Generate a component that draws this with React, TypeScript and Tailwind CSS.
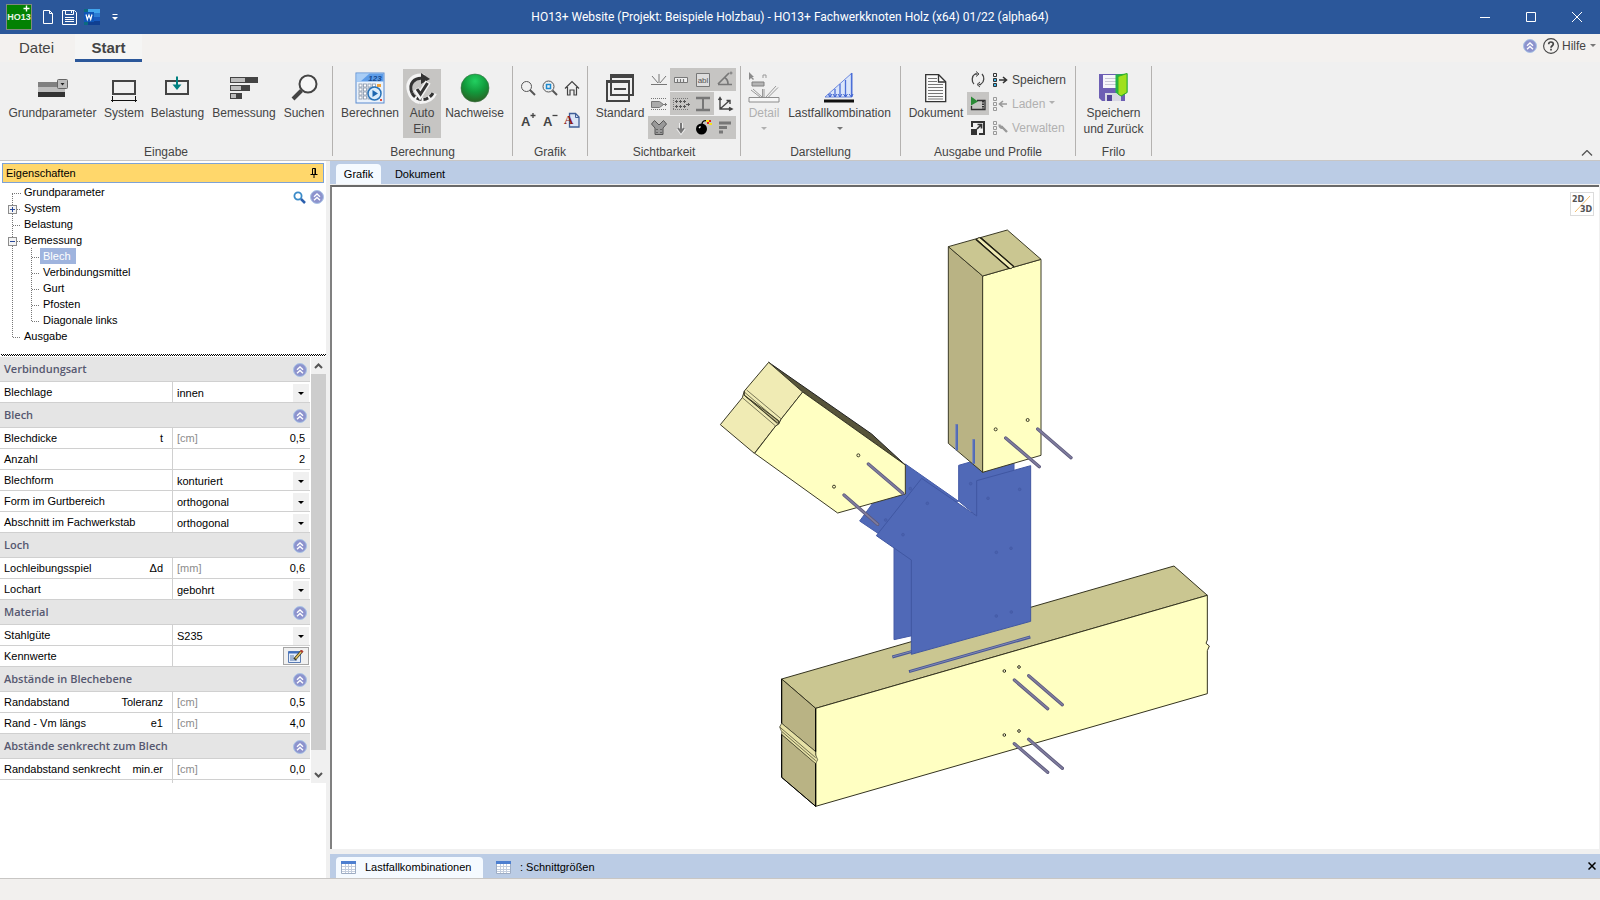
import React, { useState } from "react";
import clsx from "clsx";

const SANS = "font-['Liberation_Sans',Arial,sans-serif]";
const UI = "font-['Open_Sans','Noto_Sans',sans-serif]";

/* ---------- small shared pieces ---------- */

const CollapseBadge = ({ size = 14 }: { size?: number }) => (
  <svg width={size} height={size} viewBox="0 0 14 14" className="shrink-0">
    <circle cx="7" cy="7" r="6.5" fill="#8d93cd" stroke="#a9c3e6" />
    <path d="M4 6.8 7 4l3 2.8M4 10.3 7 7.5l3 2.8" fill="none" stroke="#fff" strokeWidth="1.3" />
  </svg>
);

const Caret = ({ className }: { className?: string }) => (
  <svg width="6" height="3" viewBox="0 0 6 3" className={className}>
    <path d="M0 0h6L3 3z" fill="currentColor" />
  </svg>
);

/* ---------- title bar ---------- */

const TitleBar = () => (
  <header className="flex h-[34px] shrink-0 items-center bg-[#2b579a] text-white">
    <div className="flex w-[520px] items-center pl-[6px]">
      <svg width="26" height="26" viewBox="0 0 26 26">
        <rect x=".5" y=".5" width="25" height="25" fill="#038103" stroke="#808a80" />
        <path d="M20.5 1.5v6M17.5 4.5h6" stroke="#fff" strokeWidth="1.4" />
        <text x="13" y="16" fontSize="9" textAnchor="middle" fontWeight="bold" fill="#e8f5e8" fontFamily="Liberation Sans, sans-serif">
          HO13
        </text>
      </svg>
      <button aria-label="Neu" className="ml-[11px]">
        <svg width="10" height="14" viewBox="0 0 10 14" fill="none" stroke="#fff">
          <path d="M.5.5h6l3 3v10h-9zM6.5.5v3h3" />
        </svg>
      </button>
      <button aria-label="Speichern" className="ml-[9px]">
        <svg width="15" height="15" viewBox="0 0 15 15" fill="none" stroke="#fff">
          <path d="M.5.5h12l2 2v12h-14zM3.5.5v4h8v-4M9.5 1v2M3 7.5h9M3 9.5h9M3 11.5h9" />
        </svg>
      </button>
      <button aria-label="Word" className="ml-[7px]">
        <svg width="16" height="16" viewBox="0 0 16 16">
          <path d="M4 0h12v4H4z" fill="#41a5ee" />
          <path d="M4 4h12v4H4z" fill="#2b7cd3" />
          <path d="M4 8h12v4H4z" fill="#185abd" />
          <path d="M4 12h12v4H4z" fill="#103f91" />
          <path d="M0 3h10v10H0z" fill="#0f56b8" />
          <path d="m2 5.500 1.300 5L5 6l1.700 4.500L8 5.500" fill="none" stroke="#fff" strokeWidth="1.200" />
          <path d="M0 0h4v3H0zM0 13h4v3H0z" fill="#0b6a80" />
        </svg>
      </button>
      <button aria-label="Schnellzugriff anpassen" className="ml-[12px]">
        <svg width="6" height="6" viewBox="0 0 6 6">
          <path d="M.5 0h5v1h-5zM0 3h6L3 6z" fill="#fff" />
        </svg>
      </button>
    </div>
    <h1 className="flex-1 text-center font-['Roboto','Open_Sans',sans-serif] text-xs whitespace-nowrap">
      HO13+ Website (Projekt: Beispiele Holzbau) - HO13+ Fachwerkknoten Holz (x64) 01/22 (alpha64)
    </h1>
    <div className="flex w-[540px] justify-end">
      <button aria-label="Minimieren" className="flex w-[46px] justify-center">
        <svg width="10" height="10" viewBox="0 0 10 10" stroke="#fff"><path d="M0 5.500h10" /></svg>
      </button>
      <button aria-label="Maximieren" className="flex w-[46px] justify-center">
        <svg width="10" height="10" viewBox="0 0 10 10" fill="none" stroke="#fff"><path d="M.5.5h9v9h-9z" /></svg>
      </button>
      <button aria-label="Schließen" className="flex w-[46px] justify-center">
        <svg width="10" height="10" viewBox="0 0 10 10" stroke="#fff"><path d="m0 0 10 10M10 0 0 10" /></svg>
      </button>
    </div>
  </header>
);

const MenuTabs = () => (
  <nav className="flex h-7 shrink-0 items-stretch bg-[#f3f1ef] text-[15px] text-[#444]">
    <button className="w-[75px] pr-[2px] text-center">Datei</button>
    <button className="w-[67px] border-b-[3px] border-[#2b579a] bg-[#f5f5f4] pt-[3px] text-center font-bold">Start</button>
    <div className="ml-auto flex items-start gap-[6px] pt-[3px] pr-1 text-[12px]">
      <span className="pt-[2px]"><CollapseBadge /></span>
      <button className="flex items-center">
        <svg width="16" height="16" viewBox="0 0 16 16" fill="none" stroke="#444">
          <circle cx="8" cy="8" r="7.4" strokeWidth="1.1" />
          <path d="M5.700 6.200C5.700 3.300 10.300 3.300 10.300 6c0 1.700-2.300 1.800-2.300 3.800M8 10.800v1.700" strokeWidth="1.700" />
        </svg>
        <span className="ml-[3px]">Hilfe</span>
        <Caret className="ml-1 mb-[2px] text-[#777]" />
      </button>
    </div>
  </nav>
);

/* ---------- large ribbon icons (32px) ---------- */

const Svg32 = ({ children }: { children: React.ReactNode }) => (
  <svg width="32" height="32" viewBox="0 0 32 32" fill="none">
    {children}
  </svg>
);

const IconParameter = () => (
  <Svg32>
    <path d="M1 10h27v5H1z" fill="#808080" />
    <path d="M1 15h27v5H1z" fill="#bdbdbd" />
    <path d="M1 20h27v5H1z" fill="#333" />
    <rect x="20.500" y="7.500" width="10" height="9" rx="1" fill="#bdbdbd" stroke="#666" />
    <path d="M23.500 11h4l-2 2.500z" fill="#222" />
  </Svg32>
);

const IconSystem = () => (
  <Svg32>
    <path d="M5 9h22v13H5z" stroke="#444" strokeWidth="2" />
    <path d="M3 28.500h26M4.500 24v6M27.500 24v6" stroke="#111" />
  </Svg32>
);

const IconLoad = () => (
  <Svg32>
    <path d="M4 9h22v13H4z" stroke="#444" strokeWidth="2" />
    <path d="M15 4.500v11" stroke="#008080" strokeWidth="2" />
    <path d="M10.500 12.500h9L15 18z" fill="#008080" />
  </Svg32>
);

const IconDesign = () => (
  <Svg32>
    <path d="M2 5h28v6H2zM2 13h20v6H2zM2 21h12v6H2z" fill="#444" />
    <path d="M3 6h14v4H3zM3 14h10v4H3zM3 22h5v4H3z" fill="#bdbdbd" />
  </Svg32>
);

const IconSearch = () => (
  <Svg32>
    <circle cx="20" cy="12" r="8.500" stroke="#444" strokeWidth="2" fill="#f6f6f6" />
    <path d="M13.500 18.500 5 27" stroke="#444" strokeWidth="4" />
  </Svg32>
);

const IconCalculate = () => (
  <Svg32>
    <rect x="2" y="1" width="28" height="30" fill="#eaf2fb" stroke="#5b8bd0" />
    <path d="M2.500 1.500h27v8h-27z" fill="#5d9ce8" />
    <path d="M2.500 1.500h13l-9 8h-4z" fill="#a9cdf5" />
    <text x="21" y="8.500" fontSize="8" fontStyle="italic" fontWeight="bold" textAnchor="middle" fill="#174a90" fontFamily="Liberation Sans, sans-serif">
      123
    </text>
    {[12, 16, 20, 24].map((y) =>
      [5, 9.5, 14, 18.5].map((x) => <rect key={`${x}-${y}`} x={x} y={y} width="3" height="3" fill="#fff" stroke="#8795a8" strokeWidth=".8" />)
    )}
    <path d="M23 12h4v3h-4z" fill="#f2a33c" />
    <path d="M26 27h2v2h-2z" fill="#e0503c" />
    <circle cx="20.500" cy="21.500" r="6.500" fill="#d7ebfb" stroke="#2772b8" strokeWidth="1.500" />
    <path d="m18.500 18 5.500 3.500-5.500 3.500z" fill="#1b66b0" />
  </Svg32>
);

const IconAuto = () => (
  <Svg32>
    <path d="M4 19C1 9 9 3 18 5M4 19c1 4 4 9 10 10M14 29c7 0 12-3 14-8" stroke="#f4f4f4" strokeWidth="6" />
    <path d="M6 21C2 11 9 5.500 17 6.500" stroke="#333" strokeWidth="3" />
    <path d="M6 21c2 5 10 9 16 5 2-1 4-3 5-5" stroke="#333" strokeWidth="3" strokeDasharray="5 2" />
    <path d="m15 1 9 6-9 5z" fill="#333" />
    <path d="m10 17 4 6 8-13" stroke="#f4f4f4" strokeWidth="6" />
    <path d="m11 17 3.500 5 7-11" stroke="#333" strokeWidth="3" />
  </Svg32>
);

const IconProof = () => (
  <Svg32>
    <defs>
      <radialGradient id="proof" cx=".5" cy=".25" r=".8">
        <stop offset="0" stopColor="#22d060" />
        <stop offset=".5" stopColor="#129a3c" />
        <stop offset="1" stopColor="#2d5a20" />
      </radialGradient>
    </defs>
    <circle cx="16" cy="16" r="14" fill="url(#proof)" stroke="#3c6e46" strokeWidth=".6" />
  </Svg32>
);

const IconStandard = () => (
  <Svg32>
    <path d="M7 3h22v20H7z" stroke="#444" strokeWidth="2" />
    <path d="M6 2h24v4H6z" fill="#444" />
    <path d="M3 9h22v20H3z" stroke="#444" strokeWidth="2" />
    <path d="M2 8h24v3H2z" fill="#444" />
    <path d="M10 17h12" stroke="#444" strokeWidth="2" />
  </Svg32>
);

const IconDetail = () => (
  <Svg32>
    <path d="M1 0v8l2-2 2 2 1-1-2-2h2z" fill="#8a8a8a" />
    <path d="M4 10h12v4H4z" fill="#b5b5b5" stroke="#808080" />
    <path d="M15 6V3h3v3" stroke="#999" />
    <path d="M1 25.500h30v4.500H1z" fill="#f6f6f6" stroke="#8c8c8c" />
    <path d="m14 25-9-8M12 25l-9-7M16 25v-8M18 25l10-11M20.500 25l9.500-9.500M14.500 25v-8" stroke="#999" />
  </Svg32>
);

const IconLoadCase = () => (
  <Svg32>
    <path d="M1 25 28 1v24z" fill="#dbe6fa" stroke="#4c6fd8" strokeWidth=".8" />
    <path d="M6 21v4M11 17v8M16 12v13M21.500 8v17M27.500 1v24" stroke="#4c6fd8" strokeWidth="1.300" />
    <path d="m4 22 2 3 2-3M9 22l2 3 2-3M14 22l2 3 2-3M19.500 22l2 3 2-3M25 22l2.500 3 1.500-3" stroke="#3a5fd0" />
    <path d="M0 27.500h30v3H0z" fill="#111" />
  </Svg32>
);

const IconDocument = () => (
  <Svg32>
    <path d="M5.700 2.700h13l7 7v20h-20z" fill="#fafafa" stroke="#333" strokeWidth="1.300" />
    <path d="M18.500 3v7h7" stroke="#333" strokeWidth="1.300" />
    <path d="M8 6.500h9M8 9.500h9M8 12.500h15M8 15.500h15M8 18.500h15M8 21.500h15M8 24.500h15M8 27h15" stroke="#777" />
  </Svg32>
);

const IconSaveBack = () => (
  <Svg32>
    <path d="M1 2h26v27H4l-3-3z" fill="#6d5fb4" />
    <path d="M5 3h15v13H5z" fill="#f6f6fa" />
    <path d="M7 6.500h11M7 9.500h11M7 12.500h11" stroke="#c9c9d6" />
    <path d="M7 21h16v8H7z" fill="#d8d8e4" />
    <path d="M9 23h5v6H9z" fill="#54469a" />
    <path d="m17.500 2.500 12-1v19l-6 4-6-4z" fill="#22b34a" />
    <path d="m20 4.500 9-3v19l-6 3.500-3-2z" fill="#9fe01c" stroke="#35b02c" />
  </Svg32>
);

/* ---------- ribbon building blocks ---------- */

const RibbonGroup = ({ label, width, children }: { label: string; width: string; children: React.ReactNode }) => (
  <>
    <section aria-label={label} className={clsx("flex shrink-0 flex-col", width)}>
      <div className="flex flex-1 items-start justify-center">{children}</div>
      <p className="text-center leading-4">{label}</p>
    </section>
    <span className="my-1 w-px shrink-0 bg-[#b4b2b0]" />
  </>
);

interface BigButtonProps {
  icon: React.ReactNode;
  label: string;
  width: string;
  active?: boolean;
  disabled?: boolean;
  menu?: boolean;
}

const BigButton = ({ icon, label, width, active, disabled, menu }: BigButtonProps) => (
  <button
    disabled={disabled}
    className={clsx(
      "mt-[7px] flex h-[69px] flex-col items-center pt-[3px] leading-4 whitespace-pre",
      width,
      active && "bg-[#c6c5c3]",
      disabled && "text-[#b0b0b0]"
    )}
  >
    {icon}
    <span className="mt-px">{label}</span>
    {menu && <Caret className={clsx("mt-[6px]", !disabled && "text-[#777]")} />}
  </button>
);

const ToolButton = ({ label, active, children }: { label: string; active?: boolean; children: React.ReactNode }) => (
  <button aria-label={label} className={clsx("flex h-[23px] w-[22px] items-center justify-center", active && "bg-[#c6c5c3]")}>
    <svg width="18" height="18" viewBox="0 1 18 18" fill="none" stroke="#777" overflow="visible">
      {children}
    </svg>
  </button>
);

const ListIcon = ({ on, children }: { on?: boolean; children: React.ReactNode }) => (
  <svg width="15" height="16" viewBox="0 0 15 16" fill="none" stroke={on ? "#333" : "#999"}>
    <path d="M.5 1.500h3v3h-3z" />
    <path d="M.5 6.500h3v3h-3zM.5 11.500h3v3h-3z" fill={on ? "#3fb6e8" : "none"} />
    {children}
  </svg>
);

const Ribbon = () => (
  <div className="flex h-[98px] shrink-0 bg-[#f0f0f0] text-[12px] text-[#444]">
    <RibbonGroup label="Eingabe" width="w-[332px]">
      <BigButton icon={<IconParameter />} label="Grundparameter" width="w-[97px]" />
      <BigButton icon={<IconSystem />} label="System" width="w-[46px]" />
      <BigButton icon={<IconLoad />} label="Belastung" width="w-[61px]" />
      <BigButton icon={<IconDesign />} label="Bemessung" width="w-[72px]" />
      <BigButton icon={<IconSearch />} label="Suchen" width="w-[48px]" />
    </RibbonGroup>
    <RibbonGroup label="Berechnung" width="w-[179px]">
      <BigButton icon={<IconCalculate />} label="Berechnen" width="w-[66px]" />
      <BigButton icon={<IconAuto />} label={"Auto\nEin"} width="w-[38px]" active />
      <BigButton icon={<IconProof />} label="Nachweise" width="w-[67px]" />
    </RibbonGroup>
    <RibbonGroup label="Grafik" width="w-[74px]">
      <div className="grid grid-cols-3 gap-y-[9px] pt-[15px]">
        <ToolButton label="Zoom">
          <circle cx="7.500" cy="7.500" r="5" stroke="#555" />
          <path d="m11 11 5 5" stroke="#555" strokeWidth="2" />
        </ToolButton>
        <ToolButton label="Zoom Fenster">
          <circle cx="7.500" cy="7.500" r="5.500" stroke="#555" />
          <path d="m11.500 11.500 4.500 4.500" stroke="#555" strokeWidth="2" />
          <path d="M5.500 5.500h4v4h-4z" stroke="#1d8ad0" strokeWidth="1.500" />
        </ToolButton>
        <ToolButton label="Gesamtansicht">
          <path d="m2 9.500 7-7 7 7M4.500 8v8H7v-5h4v5h2.500V8" stroke="#444" strokeWidth="1.200" />
        </ToolButton>
        <ToolButton label="Schrift größer">
          <text x="2" y="15" fontSize="13" fontWeight="bold" fill="#444" stroke="none" fontFamily="Liberation Sans, sans-serif">A</text>
          <path d="M11.500 4.500h5M14 2v5" stroke="#444" strokeWidth="1.300" />
        </ToolButton>
        <ToolButton label="Schrift kleiner">
          <text x="2" y="15" fontSize="13" fontWeight="bold" fill="#444" stroke="none" fontFamily="Liberation Sans, sans-serif">A</text>
          <path d="M11.500 4.500h5" stroke="#444" strokeWidth="1.300" />
        </ToolButton>
        <ToolButton label="Schriftart">
          <path d="M6.500 2.500h6l3.500 3.500v10H6.500z" fill="#dbe5f5" stroke="#3f5f98" strokeWidth="1.300" />
          <path d="M12.500 3v3.500H16" stroke="#3f5f98" />
          <text x="1" y="13" fontSize="13" fontWeight="bold" fill="#8b1a1a" stroke="none" fontFamily="Liberation Serif, serif">A</text>
        </ToolButton>
      </div>
    </RibbonGroup>
    <RibbonGroup label="Sichtbarkeit" width="w-[152px]">
      <BigButton icon={<IconStandard />} label="Standard" width="w-[56px]" />
      <div className="mt-[6px] grid grid-cols-4 gap-y-px">
        <ToolButton label="Knoten">
          <path d="M1 14.500h16M9 13V4M8 13 2 6M10 13l6-7" />
        </ToolButton>
        <ToolButton label="Bemaßung" active>
          <path d="M2.500 7.500h13v5h-13z" stroke="#777" fill="#eee" />
          <path d="M5.500 9v4M8.500 9v4M11.500 9v4" stroke="#777" strokeWidth="1.200" />
        </ToolButton>
        <ToolButton label="Text" active>
          <path d="M2.500 3.500h13v13h-13z" fill="#ddd" />
          <text x="9" y="13" fontSize="8" textAnchor="middle" fill="#555" stroke="none" fontFamily="Liberation Sans, sans-serif">abl</text>
        </ToolButton>
        <ToolButton label="Winkel" active>
          <path d="M2 14.500h14M2 14 13 3M9 8c2 1 3 4 3 6" strokeWidth="1.700" />
          <circle cx="15" cy="3" r="1" />
        </ToolButton>
        <ToolButton label="Anschluss">
          <path d="M1 4.500h16M1 15.500h16" strokeDasharray="1 1" />
          <path d="M1.500 7.500h8l4 3-4 3h-8z" fill="#aaa" />
          <path d="M13 10.500h4M15.500 9v3" />
        </ToolButton>
        <ToolButton label="Verbindungsmittel" active>
          <path d="M1 4.500h16M1 15.500h16M1.500 4v12" strokeDasharray="1 1" />
          <path d="M3 7.500h3M7 7.500h3M11 7.500h3M3 12.500h3M7 12.500h3M11 12.500h3M4.500 6v3M8.500 6v3M12.500 6v3M4.500 11v3M8.500 11v3M12.500 11v3M14 10.500h4M16.500 9v3" stroke="#555" />
        </ToolButton>
        <ToolButton label="Querschnitt" active>
          <path d="M2 4h14M2 16h14" strokeWidth="2.500" />
          <path d="M9 4v12" strokeWidth="2" />
        </ToolButton>
        <ToolButton label="Achsen">
          <path d="M4 4v11h11M4 15l9-8M2.500 6 4 3.500 5.500 6M13 13.500l3 1.500-3 1.500M10.500 6.500H14V10" stroke="#444" strokeWidth="1.400" />
        </ToolButton>
        <ToolButton label="Blech" active>
          <path d="m1.500 6 3-3.500L9 7l4.500-4.500 3 3.500L13 10v6.500H5V10z" fill="#999" stroke="#555" />
          <path d="M7 11v1M11 11v1M7 14v1M11 14v1" stroke="#333" />
        </ToolButton>
        <ToolButton label="Last" active>
          <path d="M9 5v9M6 10l3 4 3-4" stroke="#eee" strokeWidth="4" />
          <path d="M9 5v9M6 10l3 4 3-4" strokeWidth="2" />
        </ToolButton>
        <ToolButton label="Kollision" active>
          <circle cx="7.500" cy="11" r="5.500" fill="#000" stroke="none" />
          <path d="M8 6c0-3 3-4 5-3" stroke="#000" strokeWidth="1.300" />
          <path d="m5 10 1.500-1.500" stroke="#fff" strokeWidth="1.300" />
          <path d="M12 2h3v2h-3zM15 5h3v2h-3z" fill="#f5e21b" stroke="none" />
          <path d="M15 2h2v2h-2zM13 4h2v2h-2z" fill="#e02020" stroke="none" />
        </ToolButton>
        <ToolButton label="Auslastung" active>
          <path d="M3 5h12M3 9.500h8M3 14h4" strokeWidth="3" />
        </ToolButton>
      </div>
    </RibbonGroup>
    <RibbonGroup label="Darstellung" width="w-[159px]">
      <BigButton icon={<IconDetail />} label="Detail" width="w-[38px]" disabled menu />
      <BigButton icon={<IconLoadCase />} label="Lastfallkombination" width="w-[113px]" menu />
    </RibbonGroup>
    <RibbonGroup label="Ausgabe und Profile" width="w-[174px]">
      <BigButton icon={<IconDocument />} label="Dokument" width="w-[66px] pl-1" />
      <div className="mt-[6px] flex flex-col gap-px">
        <ToolButton label="Aktualisieren">
          <path d="M5 14C2.500 12 2.500 6 6 4M6 4h2.500M12 14c3.500-2 3.500-7.500 1-10M12 14.500H9.500" stroke="#444" strokeWidth="1.300" />
          <path d="m7 1.500 3 2.500-3 2.500M11 12l-3 2.500 3 2.500" stroke="#444" />
        </ToolButton>
        <ToolButton label="Vorschau" active>
          <path d="M8 6.500h8v9H2.500V12" stroke="#333" strokeWidth="1.300" />
          <path d="M14 7v8" stroke="#333" strokeWidth="2" strokeDasharray="1.500 1" />
          <path d="m2 2.500 7 5-7 4z" fill="#2a8a36" stroke="none" />
        </ToolButton>
        <ToolButton label="Vergrößern">
          <path d="M3 9V4h12v12h-5" stroke="#333" strokeWidth="2" />
          <path d="M2 11h6v6H2z" fill="#333" stroke="none" />
          <path d="m8 11 4-4M8.500 6.500h4v4" stroke="#333" strokeWidth="1.700" />
        </ToolButton>
      </div>
      <div className="mt-[6px] flex w-[86px] flex-col gap-px pl-1">
        <button className="flex h-[23px] items-center gap-1">
          <ListIcon on><path d="M6 8h7M10 5l3.500 3-3.500 3" strokeWidth="1.600" /></ListIcon>
          Speichern
        </button>
        <button disabled className="flex h-[23px] items-center gap-1 text-[#b0b0b0]">
          <ListIcon><path d="M7 8h7M10 5 6.500 8l3.500 3" strokeWidth="1.600" /></ListIcon>
          Laden
          <Caret className="mb-[2px]" />
        </button>
        <button disabled className="flex h-[23px] items-center gap-1 text-[#b0b0b0]">
          <ListIcon><path d="m8 6 6 6M6.500 4.500c0 3 2 4 4 2.500" strokeWidth="2.400" /></ListIcon>
          Verwalten
        </button>
      </div>
    </RibbonGroup>
    <RibbonGroup label="Frilo" width="w-[75px]">
      <BigButton icon={<IconSaveBack />} label={"Speichern\nund Zurück"} width="w-[68px]" />
    </RibbonGroup>
    <button aria-label="Menüband reduzieren" className="mt-auto mr-[7px] mb-[4px] ml-auto">
      <svg width="12" height="6" viewBox="0 0 12 6" fill="none" stroke="#555" strokeWidth="1.300">
        <path d="m1 5.500 5-5 5 5" />
      </svg>
    </button>
  </div>
);

/* ---------- property tree ---------- */

interface TreeItem {
  name: string;
  child?: boolean;
  box?: "plus" | "minus";
  first?: boolean;
  last?: boolean;
}

const treeItems: TreeItem[] = [
  { name: "Grundparameter", first: true },
  { name: "System", box: "plus" },
  { name: "Belastung" },
  { name: "Bemessung", box: "minus" },
  { name: "Blech", child: true },
  { name: "Verbindungsmittel", child: true },
  { name: "Gurt", child: true },
  { name: "Pfosten", child: true },
  { name: "Diagonale links", child: true, last: true },
  { name: "Ausgabe", last: true },
];

const TreeLines = ({ item }: { item: TreeItem }) => (
  <svg width={item.child ? 40 : 21} height="16" viewBox={item.child ? "0 0 40 16" : "0 0 21 16"} fill="none" stroke="#777" className="shrink-0">
    <g strokeDasharray="1 1">
      {item.child ? (
        <path d={item.last ? "M12.500 0v16M31.500 0v9.500M32 9.500h8" : "M12.500 0v16M31.500 0v16M32 9.500h8"} />
      ) : (
        <path d={item.first ? "M12 9.500h9M12.500 10v6" : item.last ? "M12.500 0v9.500M13 9.500h8" : "M12.500 0v16M13 9.500h8"} />
      )}
    </g>
    {item.box && (
      <>
        <rect x="8.500" y="5.500" width="8" height="8" fill="#f4f4f4" stroke="#8c8c8c" />
        <path d={item.box === "plus" ? "M10 9.500h5M12.500 7v5" : "M10 9.500h5"} stroke="#2a4a9a" />
      </>
    )}
  </svg>
);

const Tree = () => {
  const [selected, setSelected] = useState("Blech");
  return (
    <div className="flex h-[170px] items-start justify-between">
      <ul>
        {treeItems.map((item) => (
          <li key={item.name} className="flex h-4">
            <TreeLines item={item} />
            <button
              onClick={() => setSelected(item.name)}
              className={clsx("px-[3px] leading-4", selected === item.name && "bg-[#9fb4de] pr-[5px] text-white")}
            >
              {item.name}
            </button>
          </li>
        ))}
      </ul>
      <div className="flex items-center gap-1 pt-[6px] pr-[2px]">
        <button aria-label="Suchen">
          <svg width="13" height="13" viewBox="0 0 13 13" fill="none">
            <circle cx="5" cy="5" r="3.600" stroke="#3a8ac8" strokeWidth="1.800" />
            <path d="m8 8 4 4" stroke="#2a5fae" strokeWidth="2.500" />
          </svg>
        </button>
        <button aria-label="Alle einklappen"><CollapseBadge /></button>
      </div>
    </div>
  );
};

/* ---------- property grid ---------- */

interface Property {
  name: string;
  symbol?: string;
  unit?: string;
  value?: string;
  kind: "number" | "select" | "dialog";
}

const sections: { title: string; rows: Property[] }[] = [
  { title: "Verbindungsart", rows: [{ name: "Blechlage", value: "innen", kind: "select" }] },
  {
    title: "Blech",
    rows: [
      { name: "Blechdicke", symbol: "t", unit: "[cm]", value: "0,5", kind: "number" },
      { name: "Anzahl", value: "2", kind: "number" },
      { name: "Blechform", value: "konturiert", kind: "select" },
      { name: "Form im Gurtbereich", value: "orthogonal", kind: "select" },
      { name: "Abschnitt im Fachwerkstab", value: "orthogonal", kind: "select" },
    ],
  },
  {
    title: "Loch",
    rows: [
      { name: "Lochleibungsspiel", symbol: "Δd", unit: "[mm]", value: "0,6", kind: "number" },
      { name: "Lochart", value: "gebohrt", kind: "select" },
    ],
  },
  {
    title: "Material",
    rows: [
      { name: "Stahlgüte", value: "S235", kind: "select" },
      { name: "Kennwerte", kind: "dialog" },
    ],
  },
  {
    title: "Abstände in Blechebene",
    rows: [
      { name: "Randabstand", symbol: "Toleranz", unit: "[cm]", value: "0,5", kind: "number" },
      { name: "Rand - Vm längs", symbol: "e1", unit: "[cm]", value: "4,0", kind: "number" },
    ],
  },
  {
    title: "Abstände senkrecht zum Blech",
    rows: [{ name: "Randabstand senkrecht", symbol: "min.er", unit: "[cm]", value: "0,0", kind: "number" }],
  },
];

const PropertyRow = ({ row }: { row: Property }) => {
  const id = row.name.replace(/\W+/g, "-");
  return (
    <div className="flex h-[21px] items-stretch border-b border-[#d0d0d0]">
      <label htmlFor={id} className="flex w-[172px] items-center justify-between pr-[9px] pl-1">
        <span>{row.name}</span>
        <span>{row.symbol}</span>
      </label>
      <div className="flex min-w-0 flex-1 items-center border-l border-[#d0d0d0] pl-1">
        {row.unit && <span className="text-[#8c8c8c]">{row.unit}</span>}
        {row.kind === "number" && <input id={id} defaultValue={row.value} className="w-full min-w-0 flex-1 pr-[5px] text-right outline-none" />}
        {row.kind === "select" && (
          <div className="flex h-full flex-1 items-center pt-[2px]">
            <select id={id} defaultValue={row.value} className="min-w-0 flex-1 appearance-none outline-none">
              <option>{row.value}</option>
            </select>
            <span className="mr-px flex h-[18px] w-4 items-center justify-center bg-[#f0f0f0]">
              <Caret className="text-black" />
            </span>
          </div>
        )}
        {row.kind === "dialog" && (
          <button id={id} aria-label={row.name} className="mr-px ml-auto flex h-[18px] w-[26px] items-center justify-center border border-[#a5a5a5] bg-[#f0f0f0]">
            <svg width="16" height="13" viewBox="0 0 16 13" fill="none">
              <path d="M.5 1.500h12v11H.5z" fill="#e6eefa" stroke="#5a7cb4" />
              <path d="M.5 1.500h12v2H.5z" fill="#3f6ec0" />
              <path d="M2 6h4M2 8h4M2 10h7" stroke="#5577aa" />
              <path d="m6.500 9.500 7-8" stroke="#3a3a24" strokeWidth="3" />
              <path d="m7.500 8.500 6-7" stroke="#e8c560" strokeWidth="1.500" />
              <path d="m13 2 1.500-1.500" stroke="#b03c30" strokeWidth="3" />
            </svg>
          </button>
        )}
      </div>
    </div>
  );
};

const PropertyPanel = () => (
  <aside className="flex w-[326px] shrink-0 flex-col bg-white text-[11px] text-black">
    <div className="mx-[2px] mt-[2px] mb-px flex h-5 shrink-0 items-center justify-between border border-[#7da2d6] bg-[#ffd76b] pr-[5px] pl-[3px]">
      <h2>Eigenschaften</h2>
      <button aria-label="Anheften">
        <svg width="8" height="10" viewBox="0 0 8 10" fill="none" stroke="#000">
          <path d="M2.500 6V.5h3V6M5 .5V6M.5 6.500h7M4 6.500V10" />
        </svg>
      </button>
    </div>
    <Tree />
    <svg width="100%" height="3" className="shrink-0">
      <path d="M1 .5h325" stroke="#000" strokeDasharray="1 1" />
      <path d="M2 1.500h324" stroke="#000" strokeDasharray="1 1" />
    </svg>
    <div className="flex">
      <div className="min-w-0 flex-1">
        {sections.map((section) => (
          <section key={section.title}>
            <div className="flex h-[25px] items-center justify-between border-b border-[#d0d0d0] bg-[#e5e5e5] pt-px pr-[3px] pl-1">
              <h3 className={clsx("font-semibold text-[#565870]", UI)}>{section.title}</h3>
              <button aria-label={`${section.title} einklappen`}><CollapseBadge /></button>
            </div>
            {section.rows.map((row) => (
              <PropertyRow key={row.name} row={row} />
            ))}
          </section>
        ))}
        <div className="ml-[172px] h-[3px] border-l border-[#d0d0d0]" />
      </div>
      <div className="ml-px flex w-[15px] flex-col items-center bg-[#f0f0f0]">
        <svg width="15" height="17" viewBox="0 0 15 17" fill="none" stroke="#555" strokeWidth="2">
          <path d="m4 11 3.500-3.500L11 11" />
        </svg>
        <div className="w-full flex-1 bg-[#cdcdcd]" />
        <svg width="15" height="33" viewBox="0 0 15 33" fill="none" stroke="#555" strokeWidth="2">
          <path d="m4 23 3.500 3.500L11 23" />
        </svg>
      </div>
    </div>
  </aside>
);

/* ---------- 3D view ---------- */

const bolts = [
  [763, 690, 863, 776],
  [806, 677, 907, 764],
  [763, 881, 863, 967],
  [806, 868, 907, 955],
];

const holes = [
  [733, 663],
  [777, 651],
  [733, 855],
  [777, 843],
];

const plateHoles = [
  [451, 116], [502, 160], [377, 210], [429, 254], [632, 101], [779, 118],
  [684, 145], [709, 307], [753, 295], [709, 498], [754, 486],
];

const NodeModel = () => (
  <svg viewBox="-1104 -99 3801 1986" className="h-full w-full" fill="none" strokeLinejoin="round">
    {/* chord */}
    <g transform="translate(180 690)" stroke="#34331f" strokeWidth="3">
      <path d="M65 687 1242 348l100 88L167 775z" fill="#cac691" />
      <path d="M167 775 1342 436v134l-4 10 10 8-6 14v129L167 1069z" fill="#ffffc2" />
      <path d="m65 687 102 88v130L65 820z" fill="#b9b384" />
      <path d="m65 853 102 87v129L65 982z" fill="#b9b384" />
      <path d="m65 820 102 85v10l6 14-6 12L65 853v-8l-6-14z" fill="#e6e1a6" strokeWidth="2" />
      <path d="m59 831 108 92M66 845l101 87" strokeWidth="2" />
      <path d="m65 687v133M65 853v129l102 87M167 775v130M167 940v129" stroke="#000" />
      {holes.map(([x, y]) => (
        <circle key={`${x}-${y}`} cx={x} cy={y} r="4" fill="#fffde0" />
      ))}
      <path d="m397 621 60-17M447 665l364-104" stroke="#4a5896" strokeWidth="9" />
      <path d="m399 620 56-16M450 664l359-103" stroke="#8189b4" strokeWidth="3" />
    </g>
    {/* gusset plates */}
    <g transform="translate(180 690)" fill="#5069b7" stroke="#465ca8" strokeWidth="3">
      <path d="M402 280v289l54-12V300z" />
      <path d="m299 213 39-53 98-50V42l160 112-116 46-120 54z" />
      <path d="M596 153V46l70-20h96v140L650 198z" />
      <path d="M349 257 485 85l165 113V92l162-45v467L454 613V330z" stroke="#4057a2" />
      {plateHoles.map(([x, y]) => (
        <circle key={`${x}-${y}`} cx={x} cy={y} r="4" fill="#4a62ae" />
      ))}
    </g>
    {/* diagonal */}
    <g stroke="#3b3a26" strokeWidth="3">
      <path d="m206 427 309 215 101 93-308-219z" fill="#57543a" stroke="#222" />
      <path d="m206 427 102 89-65 82-7 14-9 6-64 82L61 614l66-81 6-20z" fill="#f0ebb4" />
      <path d="m308 516 308 219v87l-203 57-249-179 63-82 9-6 7-14z" fill="#ffffc2" />
      <path d="m133 526 103 76v10L133 526v-13" fill="#b9b384" />
      <path d="m140 510 104 87M133 516l103 88M127 533l100 85M133 526l98 84" strokeWidth="2" />
      <circle cx="475" cy="706" r="4.500" />
      <circle cx="402" cy="800" r="4.500" />
    </g>
    {/* post */}
    <g stroke="#3b3a26" strokeWidth="3">
      <path d="m745 80 103 88v589l-103-87z" fill="#b9b384" />
      <path d="m848 168 175-50v588l-175 51z" fill="#ffffc2" />
      <path d="m745 80 177-50 101 88-175 50z" fill="#cac691" />
      <path d="m829 57 8-4 8 1 96 85-8 7-7-1z" fill="#f0ebb4" />
      <path d="m827 58 102 88M841 53l101 87" stroke="#1c1b10" strokeWidth="4" />
      <circle cx="887" cy="628" r="4.500" />
      <circle cx="983" cy="600" r="4.500" />
      <path d="M770 613v78M821 658v73" stroke="#5069b7" strokeWidth="8" />
      <path d="M767 613v76M818 658v71" stroke="#8a93b4" strokeWidth="3" />
    </g>
    {/* bolts */}
    <g stroke="#5d5a7c" strokeWidth="10" strokeLinecap="round">
      <path d="m505 732 103 88M432 825l101 88M917 654l101 86M1013 627l100 86" />
      <g transform="translate(180 690)">
        {bolts.map(([x1, y1, x2, y2]) => (
          <path key={`${x1}-${y1}`} d={`M${x1} ${y1} ${x2} ${y2}`} />
        ))}
      </g>
    </g>
    <g stroke="#7f7c9e" strokeWidth="5" strokeLinecap="round">
      <path d="m505 732 103 88M432 825l101 88M917 654l101 86M1013 627l100 86" />
      <g transform="translate(180 690)">
        {bolts.map(([x1, y1, x2, y2]) => (
          <path key={`${x1}-${y1}`} d={`M${x1} ${y1} ${x2} ${y2}`} />
        ))}
      </g>
    </g>
  </svg>
);

const TableIcon = () => (
  <svg width="15" height="13" viewBox="0 0 15 13" fill="none">
    <path d="M.5.5h14v12H.5z" fill="#fff" stroke="#9eadc4" />
    <path d="M0 0h15v3H0z" fill="#4d7fd0" />
    <path d="M1 5.500h13M1 8.500h13M1 10.500h13M4.500 3v9M7.500 3v9M10.500 3v9" stroke="#c3cddd" />
  </svg>
);

const Workspace = () => (
  <main className="flex min-w-0 flex-1 flex-col bg-[#f0f0f0] pl-1 text-[11px] text-black">
    <div className="flex h-[23px] shrink-0 items-end bg-[#bbcce5] pl-[6px]">
      <button className="h-5 w-[45px] rounded-t bg-[#f5faff]">Grafik</button>
      <button className="h-5 w-[78px]">Dokument</button>
    </div>
    <div className="relative mt-px mr-px min-h-0 flex-1 border-t-2 border-l-2 border-[#696969] border-l-[#808080] bg-white">
      <NodeModel />
      <button aria-label="2D/3D" className="absolute top-[5px] right-[5px] border border-[#dcdcdc] bg-white">
        <svg width="22" height="22" viewBox="0 0 22 22" fontSize="8" fontWeight="bold" fill="#555" fontFamily="DejaVu Sans, sans-serif">
          <path d="M4 19 19 3" stroke="#f5c070" />
          <text x="1" y="9">2D</text>
          <text x="9" y="19">3D</text>
        </svg>
      </button>
    </div>
    <div className="mt-[5px] flex h-6 shrink-0 items-end bg-[#bbcce5] pl-[6px]">
      <button className="flex h-[21px] w-[147px] items-center gap-[9px] rounded-t bg-[#f5faff] pl-[5px]">
        <TableIcon />
        Lastfallkombinationen
      </button>
      <button className="flex h-[21px] items-center gap-[9px] pl-[13px]">
        <TableIcon />
        : Schnittgrößen
      </button>
      <button aria-label="Schließen" className="mr-1 mb-2 ml-auto">
        <svg width="8" height="8" viewBox="0 0 8 8" stroke="#000" strokeWidth="1.500"><path d="m.5.5 7 7M7.500.5l-7 7" /></svg>
      </button>
    </div>
  </main>
);

const App = () => (
  <div className={clsx("flex h-screen flex-col overflow-hidden", SANS)}>
    <TitleBar />
    <MenuTabs />
    <Ribbon />
    <div className="flex min-h-0 flex-1 border-y border-[#c8c6c4]">
      <PropertyPanel />
      <Workspace />
    </div>
    <footer className="h-[21px] shrink-0 bg-[#f2f0ee]" />
  </div>
);

export default App;
